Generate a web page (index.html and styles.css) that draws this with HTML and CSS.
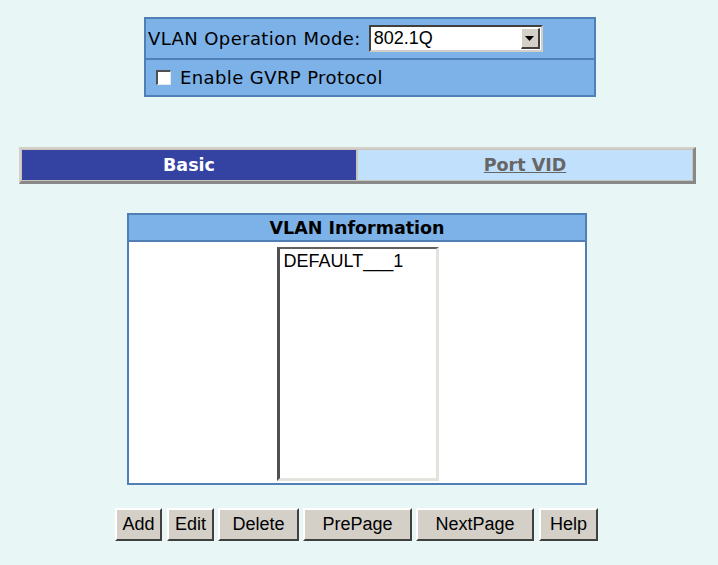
FILE: index.html
```html
<!DOCTYPE html>
<html>
<head>
<meta charset="utf-8">
<link rel="stylesheet" href="styles.css">
</head>
<body>
<div class="page">
  <div class="mode-box">
    <div class="mode-row">
      <span class="label">VLAN Operation Mode:</span>
      <div class="select">
        <span class="select-text">802.1Q</span>
        <span class="select-btn"><svg width="9" height="5" viewBox="0 0 9 5"><path d="M0 0H9L4.5 5Z" fill="#000"/></svg></span>
      </div>
    </div>
    <div class="gvrp-row">
      <span class="check"></span>
      <span class="label">Enable GVRP Protocol</span>
    </div>
  </div>

  <div class="tabs">
    <div class="tab tab-active">Basic</div>
    <div class="tab tab-link"><span>Port VID</span></div>
  </div>

  <div class="info">
    <div class="info-head">VLAN Information</div>
    <div class="info-body">
      <div class="listbox">
        <div class="list-item">DEFAULT___1</div>
      </div>
    </div>
  </div>

  <div class="buttons">
    <span class="btn b-add">Add</span>
    <span class="btn b-edit">Edit</span>
    <span class="btn b-del">Delete</span>
    <span class="btn b-pre">PrePage</span>
    <span class="btn b-next">NextPage</span>
    <span class="btn b-help">Help</span>
  </div>
</div>
</body>
</html>
```

FILE: styles.css
```css
html, body {
  margin: 0;
  padding: 0;
  background: #e8f6f6;
}
.page {
  width: 718px;
  height: 565px;
  padding-top: 17px;
  box-sizing: border-box;
  font-family: "DejaVu Sans", Verdana, sans-serif;
  overflow: hidden;
}
.mode-box {
  margin-left: 144px;
  width: 452px;
  height: 80px;
  box-sizing: border-box;
  border: 2px solid #4f7fb4;
  background: #7cb2e8;
  display: flex;
  flex-direction: column;
}
.mode-row {
  height: 41px;
  box-sizing: border-box;
  border-bottom: 2px solid #4f7fb4;
  display: flex;
  align-items: center;
  padding-left: 2px;
}
.label {
  font-size: 18px;
  color: #000;
  white-space: nowrap;
  letter-spacing: 0.4px;
}
.select {
  margin-left: 8px;
  width: 174px;
  height: 27px;
  box-sizing: border-box;
  background: #fff;
  border-top: 2px solid #404040;
  border-left: 2px solid #404040;
  border-right: 2px solid #d4d0c8;
  border-bottom: 2px solid #d4d0c8;
  display: flex;
  align-items: center;
  justify-content: space-between;
}
.select-text {
  font-family: "Liberation Sans", Arial, sans-serif;
  font-size: 18px;
  padding-left: 3px;
}
.select-btn {
  width: 19px;
  height: 21px;
  margin-right: 1px;
  box-sizing: border-box;
  background: #d4d0c8;
  border-top: 1px solid #fff;
  border-left: 1px solid #fff;
  border-right: 2px solid #404040;
  border-bottom: 2px solid #404040;
  display: flex;
  align-items: center;
  justify-content: center;
}
.gvrp-row {
  flex: 1;
  display: flex;
  align-items: center;
  padding-left: 10px;
}
.check {
  width: 15px;
  height: 15px;
  box-sizing: border-box;
  background: #fff;
  border-top: 2px solid #505050;
  border-left: 2px solid #505050;
  border-right: 1px solid #e8e8e8;
  border-bottom: 1px solid #e8e8e8;
  margin-right: 9px;
}
.tabs {
  margin-top: 50px;
  margin-left: 19px;
  width: 677px;
  height: 37px;
  box-sizing: border-box;
  border-top: 2px solid #d4d0c8;
  border-left: 2px solid #d4d0c8;
  border-right: 3px solid #888;
  border-bottom: 3px solid #888;
  padding: 1px;
  background: #c8c4bc;
  display: flex;
  gap: 2px;
}
.tab {
  flex: 1;
  display: flex;
  align-items: center;
  justify-content: center;
  font-weight: bold;
  font-size: 17.5px;
}
.tab-active {
  background: #3442a2;
  color: #fff;
}
.tab-link {
  background: #c0e0fc;
  color: #666;
  text-decoration: underline;
}
.info {
  margin-top: 29px;
  margin-left: 127px;
  width: 460px;
  height: 272px;
  box-sizing: border-box;
  border: 2px solid #4f7fb4;
  background: #fff;
  display: flex;
  flex-direction: column;
}
.info-head {
  height: 27px;
  box-sizing: border-box;
  background: #7cb2e8;
  border-bottom: 2px solid #4f7fb4;
  display: flex;
  align-items: center;
  justify-content: center;
  font-weight: bold;
  font-size: 17.5px;
  color: #000;
}
.info-body {
  flex: 1;
  display: flex;
  justify-content: center;
  padding-top: 5px;
  padding-left: 1px;
}
.listbox {
  width: 162px;
  height: 234px;
  box-sizing: border-box;
  border-top: 2px solid #606060;
  border-left: 3px solid #505050;
  border-right: 3px solid #e4e2dc;
  border-bottom: 3px solid #e4e2dc;
  background: #fff;
  font-family: "Liberation Sans", Arial, sans-serif;
  font-size: 18px;
}
.list-item {
  padding-left: 4px;
  padding-top: 2px;
}
.buttons {
  margin-top: 23px;
  margin-left: 115px;
  display: flex;
  gap: 4px;
}
.btn {
  height: 33px;
  box-sizing: border-box;
  background: #d4d0c8;
  border-top: 2px solid #fff;
  border-left: 2px solid #fff;
  border-right: 2px solid #404040;
  border-bottom: 2px solid #404040;
  display: flex;
  align-items: center;
  justify-content: center;
  font-family: "Liberation Sans", Arial, sans-serif;
  font-size: 18px;
  color: #000;
}
.b-add { width: 47px; }
.b-edit { width: 47px; margin-left: 1px; }
.b-del { width: 81px; }
.b-pre { width: 109px; }
.b-next { width: 118px; }
.b-help { width: 59px; margin-left: 1px; }
```
